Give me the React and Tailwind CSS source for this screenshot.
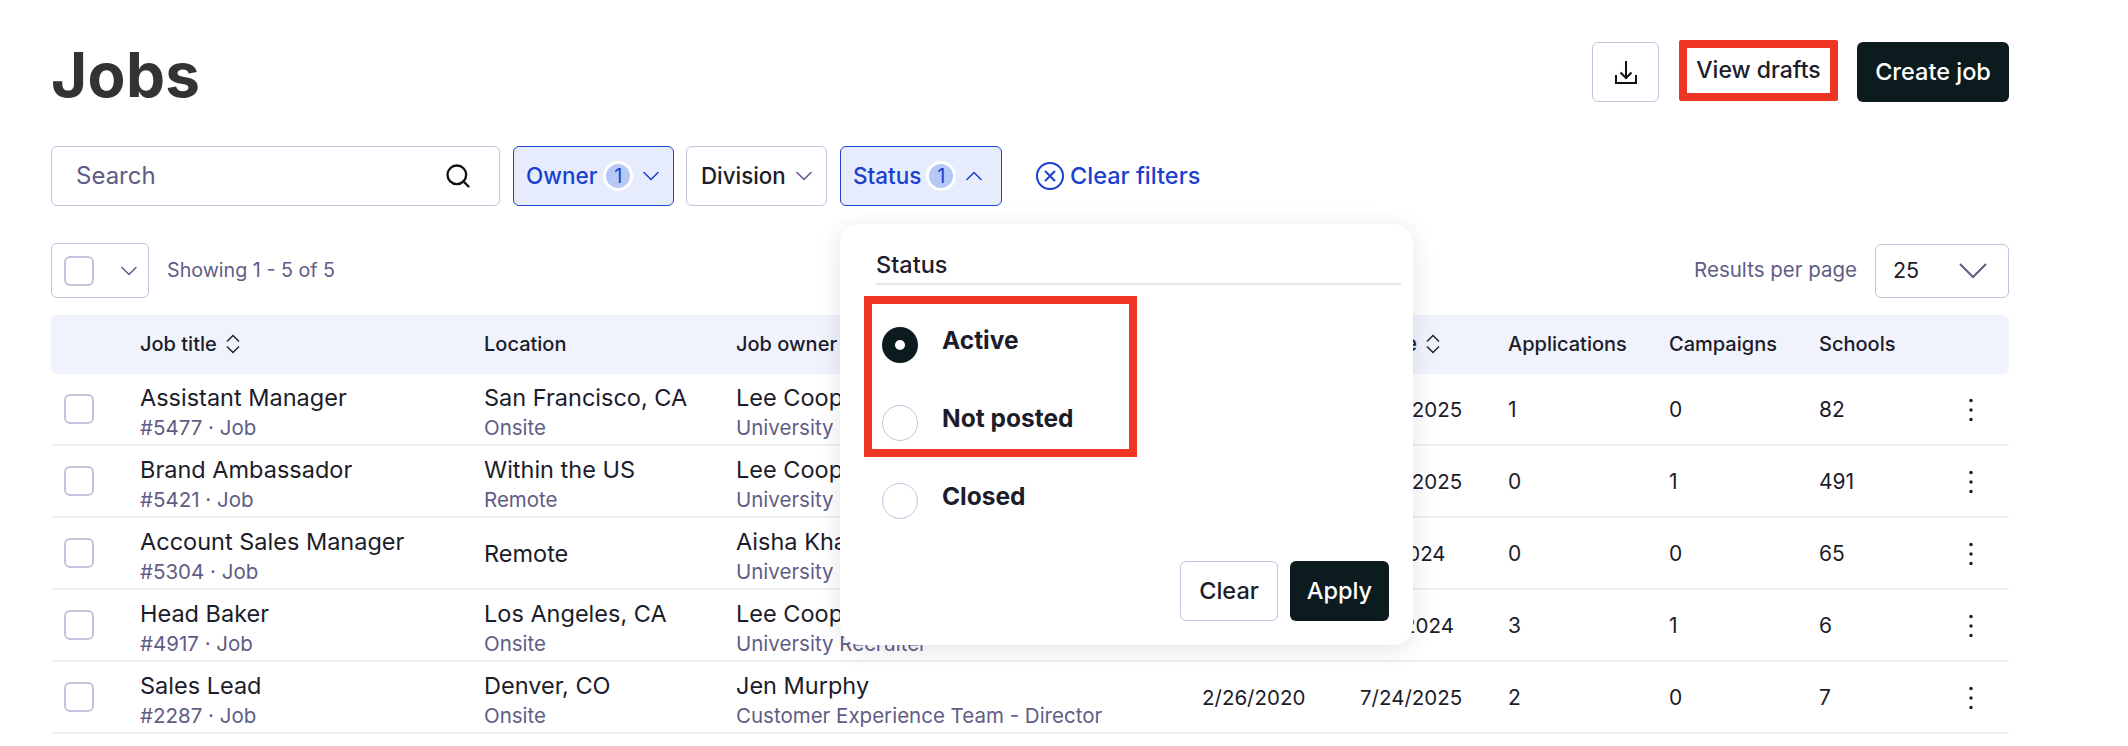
import { Search, ChevronDown, ChevronUp } from 'lucide-react';

const rows = [
  { title: 'Assistant Manager', sub: '#5477 · Job', loc: 'San Francisco, CA', mode: 'Onsite', owner: 'Lee Cooper', role: 'University Recruiter', created: '3/12/2025', updated: '7/24/2025', apps: 1, camps: 0, schools: 82 },
  { title: 'Brand Ambassador', sub: '#5421 · Job', loc: 'Within the US', mode: 'Remote', owner: 'Lee Cooper', role: 'University Recruiter', created: '2/20/2025', updated: '7/24/2025', apps: 0, camps: 1, schools: 491 },
  { title: 'Account Sales Manager', sub: '#5304 · Job', loc: 'Remote', owner: 'Aisha Khan', role: 'University Recruiter', created: '9/10/2024', updated: '7/1/2024', apps: 0, camps: 0, schools: 65 },
  { title: 'Head Baker', sub: '#4917 · Job', loc: 'Los Angeles, CA', mode: 'Onsite', owner: 'Lee Cooper', role: 'University Recruiter', created: '4/18/2024', updated: '7/11/2024', apps: 3, camps: 1, schools: 6 },
  { title: 'Sales Lead', sub: '#2287 · Job', loc: 'Denver, CO', mode: 'Onsite', owner: 'Jen Murphy', role: 'Customer Experience Team - Director', created: '2/26/2020', updated: '7/24/2025', apps: 2, camps: 0, schools: 7 },
];

const cols = 'grid grid-cols-[89px_344px_252px_466px_158px_148px_161px_150px_152px_38px] items-center';

function SortIcon() {
  return (
    <svg width="16" height="20" viewBox="0 0 16 20" fill="none" stroke="#1c1c2a" strokeWidth="1.4" className="ml-[8px]">
      <path d="M2 7.5 8 1.5l6 6M2 12.5l6 6 6-6" />
    </svg>
  );
}

function Badge() {
  return (
    <span className="flex h-[24px] w-[24px] items-center justify-center rounded-full bg-[#b5c8f6] text-[20px] font-normal text-[#1b3fd0] ring-[3px] ring-white">
      1
    </span>
  );
}

function Radio({ label, checked }) {
  return (
    <div className="flex h-[78px] items-start pl-[42px]">
      {checked ? (
        <span className="flex h-[36px] w-[36px] items-center justify-center rounded-full bg-[#0b1b1e]">
          <span className="h-[10px] w-[10px] rounded-full bg-white" />
        </span>
      ) : (
        <span className="h-[36px] w-[36px] rounded-full border border-[#c4c2dc]" />
      )}
      <span className="-mt-[5px] ml-[24px] text-[24.5px] leading-[36px] font-bold text-[#1c1c2a]">{label}</span>
    </div>
  );
}

export default function App() {
  return (
    <div className="ml-[51px] w-[1958px] pt-[42px] font-[family-name:Inter,sans-serif] text-[#1c1c2a]">
      <div className="flex h-[60px] items-start justify-between">
        <h1 className="mt-[3px] text-[62px] leading-[60px] font-bold tracking-[0.005em] text-[#333333]">Jobs</h1>
        <div className="flex items-start">
          <button className="flex h-[60px] w-[67px] items-center justify-center rounded-[6px] border border-[#c4c2dc] bg-white">
            <svg width="24" height="24" viewBox="0 0 24 24" fill="none" stroke="#111" strokeWidth="2">
              <path d="M12 1v17M6.5 12.5l5.5 5.5 5.5-5.5M2 15v8h20v-8" />
            </svg>
          </button>
          <button className="-mt-[2px] ml-[20px] h-[61px] w-[159px] rounded-[2px] border-8 border-[#ee3524] bg-white text-[23px] font-medium whitespace-nowrap">
            View drafts
          </button>
          <button className="ml-[19px] h-[60px] w-[152px] rounded-[6px] bg-[#0b1b1e] text-[23.5px] font-medium text-white">
            Create job
          </button>
        </div>
      </div>

      <div className="mt-[44px] flex h-[60px] items-center">
        <div className="flex h-full w-[449px] items-center justify-between rounded-[6px] border border-[#c4c2dc] pr-[27px] pl-[24px]">
          <span className="text-[24px] text-[#5f5d85]">Search</span>
          <Search size={28} strokeWidth={2} color="#111" />
        </div>
        <button className="ml-[13px] flex h-full w-[161px] items-center rounded-[6px] border border-[#1f46d2] bg-[#e6ecfb] pl-[12px] text-[22.5px] font-medium text-[#1b3fd0]">
          Owner
          <span className="ml-[9px]"><Badge /></span>
          <ChevronDown size={28} strokeWidth={1.3} className="ml-[7px]" />
        </button>
        <button className="ml-[12px] flex h-full w-[141px] items-center rounded-[6px] border border-[#c4c2dc] pl-[14px] text-[22.3px] font-medium">
          Division
          <ChevronDown size={28} strokeWidth={1.3} color="#5f5d85" className="ml-[4px]" />
        </button>
        <div className="relative ml-[13px] h-full">
          <button className="flex h-full w-[162px] items-center rounded-[6px] border border-[#1f46d2] bg-[#e6ecfb] pl-[12px] text-[22.5px] font-medium text-[#1b3fd0]">
            Status
            <span className="ml-[8px]"><Badge /></span>
            <ChevronUp size={28} strokeWidth={1.3} className="ml-[7px]" />
          </button>

          <div className="absolute top-[78px] left-0 z-10 h-[421px] w-[573px] rounded-[20px] bg-white shadow-[0_4px_24px_rgba(40,40,70,0.12)]">
            <div className="mr-[12px] ml-[36px] flex h-[61px] items-end border-b-2 border-[#e6e6ee] pb-[3px] text-[23.5px] leading-[30px] font-medium">
              Status
            </div>
            <div className="mt-[42px]">
              <Radio label="Active" checked />
              <Radio label="Not posted" />
              <Radio label="Closed" />
            </div>
            <div className="absolute right-[24px] bottom-[24px] flex gap-[12px]">
              <button className="h-[60px] w-[98px] rounded-[6px] border border-[#c4c2dc] bg-white text-[23.5px] font-medium">Clear</button>
              <button className="h-[60px] w-[99px] rounded-[6px] bg-[#0b1b1e] text-[23.5px] font-medium text-white">Apply</button>
            </div>
            <div className="absolute top-[72px] left-[24px] h-[161px] w-[273px] border-8 border-[#ee3524]" />
          </div>
        </div>
        <button className="ml-[34px] flex items-center text-[23.5px] font-medium text-[#1b3fd0]">
          <svg width="28" height="28" viewBox="0 0 28 28" fill="none" stroke="#1b3fd0" strokeWidth="2" className="mr-[6px]">
            <circle cx="14" cy="14" r="13" />
            <path d="m9 9 10 10M19 9 9 19" />
          </svg>
          Clear filters
        </button>
      </div>

      <div className="mt-[37px] flex h-[55px] items-center justify-between">
        <div className="flex items-center">
          <div className="flex h-[55px] w-[98px] items-center rounded-[6px] border border-[#c4c2dc] pl-[12px]">
            <span className="h-[30px] w-[30px] rounded-[6px] border-2 border-[#c4c2dc]" />
            <ChevronDown size={28} strokeWidth={1.3} color="#5f5d85" className="ml-[21px]" />
          </div>
          <span className="ml-[18px] text-[19.7px] text-[#5f5d85]">Showing 1 - 5 of 5</span>
        </div>
        <div className="flex items-center">
          <span className="text-[20.5px] text-[#5f5d85]">Results per page</span>
          <div className="ml-[18px] flex h-[54px] w-[134px] items-center justify-between rounded-[6px] border border-[#c4c2dc] pr-[21px] pl-[17px] text-[21.5px]">
            25
            <svg width="28" height="16" viewBox="0 0 28 16" fill="none" stroke="#5f5d85" strokeWidth="2">
              <path d="m1 1 13 13L27 1" />
            </svg>
          </div>
        </div>
      </div>

      <div className={`${cols} mt-[17px] h-[59px] rounded-[6px] bg-[#f0f3fb] pb-[2px] text-[20px] font-medium`}>
        <span />
        <span className="flex items-center">Job title<SortIcon /></span>
        <span>Location</span>
        <span>Job owner</span>
        <span>Date created</span>
        <span className="flex items-center text-[21px]">Close<SortIcon /></span>
        <span>Applications</span>
        <span>Campaigns</span>
        <span>Schools</span>
        <span />
      </div>

      {rows.map((r) => (
        <div key={r.sub} className={`${cols} h-[72px] border-b-2 border-[#eef0f7] text-[20.5px]`}>
          <span className="ml-[13px] h-[30px] w-[30px] rounded-[6px] border-2 border-[#c4c2dc]" />
          <div className="pt-[6px]">
            <div className="text-[23.5px] leading-[32px]">{r.title}</div>
            <div className="leading-[28px] text-[#5f5d85]">{r.sub}</div>
          </div>
          <div className={r.mode ? 'pt-[6px]' : 'pt-[2px]'}>
            <div className="text-[23.5px] leading-[32px]">{r.loc}</div>
            {r.mode && <div className="leading-[28px] text-[#5f5d85]">{r.mode}</div>}
          </div>
          <div className="pt-[6px]">
            <div className="text-[23.5px] leading-[32px]">{r.owner}</div>
            <div className="leading-[28px] text-[#5f5d85]">{r.role}</div>
          </div>
          <span className="pt-[2px]">{r.created}</span>
          <span className="pt-[2px]">{r.updated}</span>
          <span className="pt-[2px] text-[21px]">{r.apps}</span>
          <span className="pt-[2px] text-[21px]">{r.camps}</span>
          <span className="pt-[2px] text-[21px]">{r.schools}</span>
          <svg width="6" height="24" viewBox="0 0 6 24" fill="#1c1c2a" className="-ml-[3px] mt-[2px]">
            <circle cx="3" cy="2.5" r="1.7" />
            <circle cx="3" cy="12" r="1.7" />
            <circle cx="3" cy="21.5" r="1.7" />
          </svg>
        </div>
      ))}
    </div>
  );
}
